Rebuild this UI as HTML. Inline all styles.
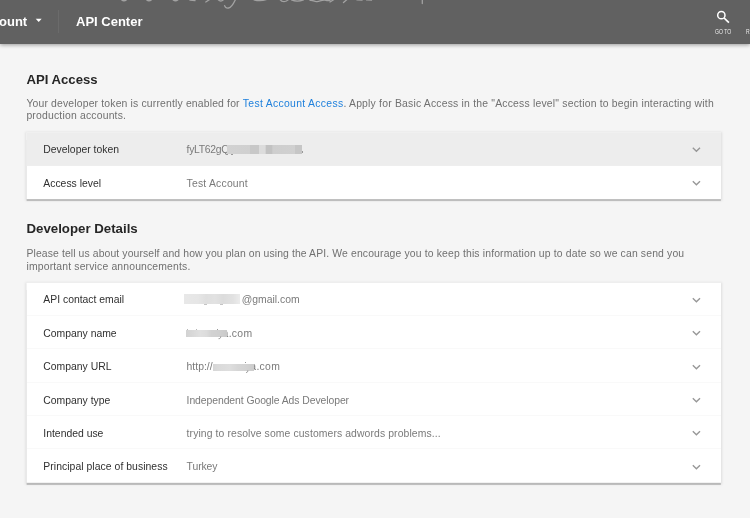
<!DOCTYPE html>
<html><head><meta charset="utf-8">
<style>
*{box-sizing:border-box;margin:0;padding:0}
html,body{width:750px;height:518px;overflow:hidden;background:#f5f5f5;font-family:"Liberation Sans",sans-serif;}
#hdr{position:absolute;left:0;top:0;width:750px;height:44px;background:#616161;box-shadow:0 1.3px 4px rgba(0,0,0,.38);}
#hdr .t{position:absolute;color:#fff;font-weight:bold;font-size:13px;line-height:16px;white-space:nowrap}
#sep{position:absolute;left:58px;top:10px;width:1px;height:23px;background:#6b6b6b}
.h{position:absolute;left:26px;font-weight:bold;font-size:13px;color:#262626;line-height:16px;white-space:nowrap}
.p{position:absolute;left:26px;font-size:10.4px;line-height:13px;color:#707070;white-space:pre}
.p a{color:#1f80dc;text-decoration:none}
.card{position:absolute;left:26.5px;width:694.5px}
.row{position:relative;height:33.33px;border-bottom:1.5px solid #f9f9f9}
.row:last-child{border-bottom:0}
.row .l{position:absolute;left:16.8px;top:0;line-height:33px;font-size:10.4px;color:#303030;white-space:nowrap}
.row .v{position:absolute;left:160.1px;top:0;line-height:33px;font-size:10.4px;color:#7a7a7a;white-space:nowrap}
.row svg.c{position:absolute;left:665px;top:14.1px}
.row.s .l,.row.s .v{top:1px}
.b{position:absolute;background:#e2e2e2;filter:blur(.6px)}
</style></head><body><div id="w" style="position:absolute;left:0;top:0;width:750px;height:518px;will-change:transform">
<svg style="position:absolute;left:0;top:0" width="750" height="518"><defs><filter id="f1" x="-5%" y="-5%" width="110%" height="110%"><feGaussianBlur stdDeviation=".4"/></filter><filter id="f2" x="-5%" y="-5%" width="110%" height="110%"><feGaussianBlur stdDeviation="1.2"/></filter></defs>
<rect x="25.400" y="132" width="696.700" height="68.800" fill="#000" fill-opacity=".09" filter="url(#f2)"/>
<rect x="26.600" y="140" width="694.300" height="61.050" fill="#000" fill-opacity=".185" filter="url(#f1)"/>
<rect x="26.500" y="132.600" width="694.500" height="66.500" fill="#fff"/>
<rect x="26.500" y="132.600" width="694.500" height="33.300" fill="#ededed"/>
<rect x="25.400" y="282.400" width="696.700" height="202.100" fill="#000" fill-opacity=".09" filter="url(#f2)"/>
<rect x="26.600" y="290" width="694.300" height="195" fill="#000" fill-opacity=".185" filter="url(#f1)"/>
<rect x="26.500" y="282.800" width="694.500" height="200" fill="#fff"/>
</svg>
<div id="hdr">
<svg style="position:absolute;left:0;top:0" width="750" height="12"><g fill="none" stroke="#a2a2a2" stroke-width="1.3" stroke-linecap="round"><path d="M235.700 -1C233.800 3 232 7.400 228.500 8c-2 .3-3.400-.8-3.900-2.400"/><path d="M121.500 -.3c1.500 1.300 3.500 1.300 5 0M146.500 -.3c1.500 1.300 3.500 1.300 5 0M173 -.3c1.500 1.300 3.500 1.300 5 0M190 .2l5 .4M209.300 -.3l-3.500 2.300M218.300 -.2c1.500 1.600 3.500 1.600 5 0M254 -.2c4 1.200 8 1.200 12-.1M280 -.4c2 2.600 6 2.600 8.500 0M291.500 -.2c3.500 1.600 8 1.600 12 0M310 .4c3-.8 4 1.600 7 1.200s5-1.800 8-1.400 3 .8 5 .2M334 -.5l-4 2.500M347 -.5l-3.500 3M357 -.1l5 .2M366.500 -.1l5 .2M422.300 -1v4.600"/></g></svg>
 <div class="t" style="left:-1px;top:14px">ount</div>
 <svg style="position:absolute;left:35px;top:18px" width="8" height="5"><path d="M0.700 0.700h6L3.700 4.100z" fill="#fff"/></svg>
 <div id="sep"></div>
 <div class="t" style="left:76px;top:14px">API Center</div>
 <svg style="position:absolute;left:716px;top:10px" width="14" height="14" viewBox="0 0 14 14"><circle cx="5.35" cy="5.2" r="3.65" fill="none" stroke="#fff" stroke-width="1.5"/><path d="M8.100 8L12.900 12.700" stroke="#fff" stroke-width="1.7"/></svg>
 <div class="t" style="left:715.3px;top:28.3px;font-size:6.4px;line-height:7px;font-weight:normal;color:rgba(255,255,255,.88);transform:scaleX(.79);transform-origin:0 0">GO TO</div>
 <div class="t" style="left:746px;top:28.3px;font-size:6.4px;line-height:7px;font-weight:normal;color:rgba(255,255,255,.88);transform:scaleX(.79);transform-origin:0 0">RE</div>
</div>
<div class="h" style="top:71.3px;left:26.5px;font-size:13.15px;transform:translateY(.5px)">API Access</div>
<div class="p" style="top:97.5px;left:26.4px;line-height:12px"><span style="letter-spacing:.167px">Your developer token is currently enabled for </span><a style="letter-spacing:.31px">Test Account Access</a><span style="letter-spacing:.2px">. Apply for Basic Access in the "Access level" section to begin interacting with</span>
<span style="letter-spacing:.195px">production accounts.</span></div>
<div class="card" style="top:132.4px;height:66.7px">
 <div class="row s" style="border-bottom:0;height:33.6px"><span class="l">Developer token</span><span class="v" style="letter-spacing:-.3px">fyLT62gQ</span><svg class="c" width="10" height="7"><path d="M0.8 1.7l3.6 3.6 3.6-3.6" fill="none" stroke="#979797" stroke-width="1.35"/></svg></div>
 <div class="row s"><span class="l">Access level</span><span class="v" style="letter-spacing:.2px">Test Account</span><svg class="c" width="10" height="7"><path d="M0.8 1.2l3.6 3.6 3.6-3.6" fill="none" stroke="#979797" stroke-width="1.35"/></svg></div>
</div>
<div class="h" style="top:221px;left:26.5px;font-size:13.25px">Developer Details</div>
<div class="p" style="top:246.7px;left:26.5px"><span style="letter-spacing:.108px">Please tell us about yourself and how you plan on using the API.</span><span style="letter-spacing:.153px"> We encourage you to keep this information up to date so we can send you</span>
<span style="letter-spacing:.16px">important service announcements.</span></div>
<div class="card" style="top:282.8px;height:200px">
 <div class="row"><span class="l">API contact email</span><span class="v" style="left:215.2px">@gmail.com</span><svg class="c" width="10" height="7"><path d="M0.8 1.2l3.6 3.6 3.6-3.6" fill="none" stroke="#979797" stroke-width="1.35"/></svg></div>
 <div class="row s"><span class="l">Company name</span><span class="v" style="left:196.1px;letter-spacing:.3px">a.com</span><svg class="c" width="10" height="7"><path d="M0.8 1.2l3.6 3.6 3.6-3.6" fill="none" stroke="#979797" stroke-width="1.35"/></svg></div>
 <div class="row s"><span class="l">Company URL</span><span class="v">http://</span><span class="v" style="left:223.8px;letter-spacing:.3px">a.com</span><svg class="c" width="10" height="7"><path d="M0.8 1.2l3.6 3.6 3.6-3.6" fill="none" stroke="#979797" stroke-width="1.35"/></svg></div>
 <div class="row s"><span class="l">Company type</span><span class="v" style="letter-spacing:-.07px">Independent Google Ads Developer</span><svg class="c" width="10" height="7"><path d="M0.8 1.2l3.6 3.6 3.6-3.6" fill="none" stroke="#979797" stroke-width="1.35"/></svg></div>
 <div class="row s"><span class="l">Intended use</span><span class="v" style="letter-spacing:.1px">trying to resolve some customers adwords problems...</span><svg class="c" width="10" height="7"><path d="M0.8 1.2l3.6 3.6 3.6-3.6" fill="none" stroke="#979797" stroke-width="1.35"/></svg></div>
 <div class="row s"><span class="l" style="letter-spacing:.05px">Principal place of business</span><span class="v" style="letter-spacing:-.1px">Turkey</span><svg class="c" width="10" height="7"><path d="M0.8 1.2l3.6 3.6 3.6-3.6" fill="none" stroke="#979797" stroke-width="1.35"/></svg></div>
</div>

<div class="b" style="left:226.6px;top:144.8px;width:75.8px;height:8.9px;filter:blur(.6px);background:linear-gradient(90deg,#d2d2d2 0,#d0d0d0 30%,#c8c8c8 31%,#c8c8c8 42%,#dcdcdc 43%,#dcdcdc 51%,#c2c2c2 52%,#c2c2c2 60%,#cecece 61%,#d0d0d0 90%,#c6c6c6 91%,#c6c6c6 100%)"></div>
<div class="b" style="left:231.4px;top:153.7px;width:1.8px;height:1px;background:#999"></div>
<div class="b" style="left:301.8px;top:150.6px;width:1.6px;height:2.2px;background:#999"></div>
<div class="b" style="left:184px;top:293.9px;width:55.7px;height:10px;background:linear-gradient(90deg,#e8e8e8 0,#e6e6e6 25%,#dfdfdf 40%,#e2e2e2 55%,#dcdcdc 70%,#e2e2e2 88%,#ececec 100%)"></div>
<div class="b" style="left:203.7px;top:303.9px;width:3.4px;height:1.2px;background:#c4c4c4"></div>
<div class="b" style="left:219.7px;top:303.9px;width:3.4px;height:1.2px;background:#c4c4c4"></div>
<div class="b" style="left:186px;top:329.800px;width:40.500px;height:7.200px;background:linear-gradient(90deg,#d2d2d2 0,#d6d6d6 10%,#e0e0e0 35%,#dcdcdc 50%,#d2d2d2 62%,#d0d0d0 80%,#c9c9c9 100%)"></div>
<div class="b" style="left:187.200px;top:328.900px;width:1px;height:1.200px;background:#b8b8b8"></div>
<div class="b" style="left:196px;top:328.900px;width:1px;height:1.200px;background:#b8b8b8"></div>
<div class="b" style="left:216.800px;top:328.800px;width:1.200px;height:1.300px;background:#999"></div>
<svg style="position:absolute;left:216px;top:335px" width="8" height="6"><path d="M4.700 1.500C4.700 3 4 3.700 2.600 3.700" fill="none" stroke="#8c8c8c" stroke-width="1"/></svg>
<div class="b" style="left:213px;top:363.800px;width:41px;height:6.800px;background:linear-gradient(90deg,#d6d6d6 0,#dadada 12%,#dedede 40%,#d6d6d6 60%,#d2d2d2 80%,#cccccc 100%)"></div>
<div class="b" style="left:244.500px;top:362.100px;width:1.200px;height:1.300px;background:#999"></div>
<svg style="position:absolute;left:243px;top:368.500px" width="8" height="6"><path d="M4.800 1.500C4.800 3 4.100 3.500 3 3.500" fill="none" stroke="#8c8c8c" stroke-width="1"/></svg>
</div></body></html>
